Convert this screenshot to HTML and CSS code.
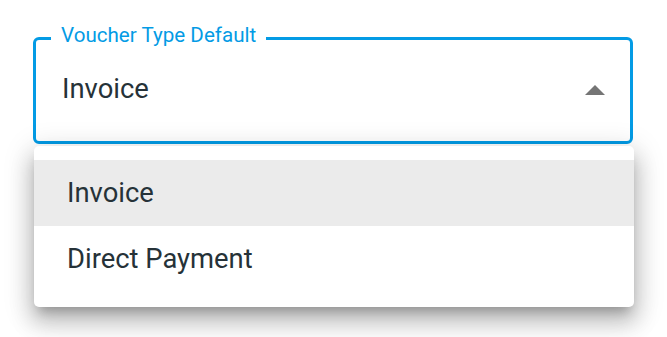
FILE: index.html
```html
<!DOCTYPE html>
<html lang="en">
<head>
<meta charset="utf-8">
<title>Voucher Type Default</title>
<link rel="stylesheet" href="styles.css">
</head>
<body>
<div class="page">
  <fieldset class="field">
    <legend class="field-label">Voucher Type Default</legend>
    <div class="field-row">
      <span class="field-value">Invoice</span>
      <svg class="arrow" width="20" height="10" viewBox="0 0 20 10" aria-hidden="true"><path d="M0 10 L10 0 L20 10 Z" fill="#757575"/></svg>
    </div>
  </fieldset>
  <ul class="menu">
    <li class="menu-item selected">Invoice</li>
    <li class="menu-item">Direct Payment</li>
  </ul>
</div>
</body>
</html>
```
FILE: styles.css
```css
html, body {
  margin: 0;
  padding: 0;
  background: #ffffff;
}
body {
  font-family: Roboto, "Liberation Sans", Arial, sans-serif;
  color: #263238;
}
.page {
  display: flex;
  flex-direction: column;
  align-items: flex-start;
  padding: 23px 0 32px;
}
.field {
  box-sizing: border-box;
  width: 600px;
  margin: 0 0 0 33px;
  padding: 0 25px 0 15px;
  border: 3px solid #039be5;
  border-radius: 6px;
  background: #ffffff;
}
.field-label {
  padding: 0 10px 7px;
  font-size: 20.6px;
  line-height: 24px;
  color: #039be5;
}
.field-row {
  display: flex;
  align-items: center;
  justify-content: space-between;
  height: 32px;
  margin: 19px 0 36px;
  padding-left: 11px;
}
.field-value {
  font-size: 27.4px;
  line-height: 32px;
  color: #263238;
}
.arrow {
  display: block;
  margin-top: 2px;
}
.menu {
  list-style: none;
  box-sizing: border-box;
  width: 600px;
  margin: 2px 0 0 34px;
  padding: 14px 0 15px;
  background: #ffffff;
  border-radius: 5px;
  box-shadow: 0 9px 11px -5px rgba(0,0,0,0.25), 0 15px 22px 3px rgba(0,0,0,0.16), 0 6px 28px 5px rgba(0,0,0,0.13);
}
.menu-item {
  display: flex;
  align-items: center;
  height: 66px;
  padding-left: 33px;
  font-size: 27.4px;
  color: #263238;
}
.menu-item.selected {
  background: #ebebeb;
}
```
